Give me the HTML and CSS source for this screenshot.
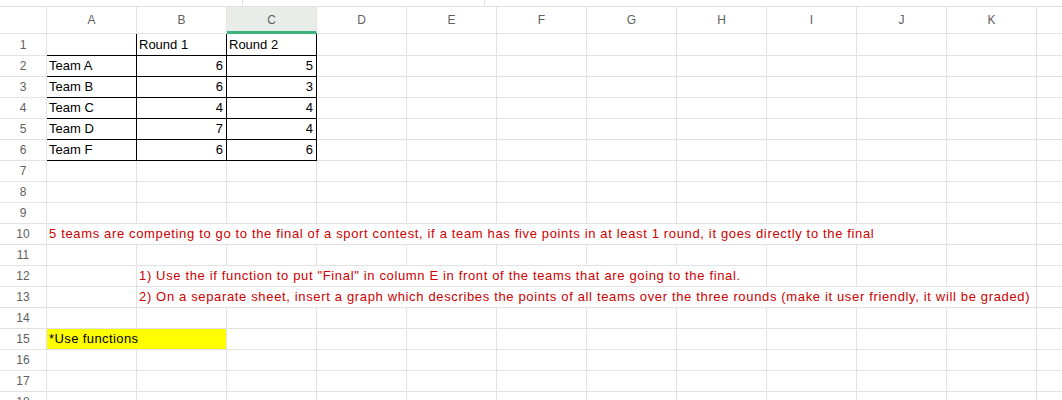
FILE: index.html
```html
<!DOCTYPE html>
<html>
<head>
<meta charset="utf-8">
<link rel="stylesheet" href="styles.css">
</head>
<body>
<div class="sheet">
  <div class="topbar"><div class="seg first"></div><div class="seg"></div><div class="seg rest"></div></div>

  <div class="row hdr">
    <div class="corner"></div>
    <div>A</div><div>B</div><div class="sel">C</div><div>D</div><div>E</div><div>F</div><div>G</div><div>H</div><div>I</div><div>J</div><div>K</div><div class="last"></div>
  </div>

  <div class="row r1">
    <div class="num">1</div>
    <div class="br bb"></div><div class="br bb">Round 1</div><div class="br bb">Round 2</div>
    <div></div><div></div><div></div><div></div><div></div><div></div><div></div><div></div><div class="last"></div>
  </div>
  <div class="row">
    <div class="num">2</div>
    <div class="br bb">Team A</div><div class="br bb right">6</div><div class="br bb right">5</div>
    <div></div><div></div><div></div><div></div><div></div><div></div><div></div><div></div><div class="last"></div>
  </div>
  <div class="row">
    <div class="num">3</div>
    <div class="br bb">Team B</div><div class="br bb right">6</div><div class="br bb right">3</div>
    <div></div><div></div><div></div><div></div><div></div><div></div><div></div><div></div><div class="last"></div>
  </div>
  <div class="row">
    <div class="num">4</div>
    <div class="br bb">Team C</div><div class="br bb right">4</div><div class="br bb right">4</div>
    <div></div><div></div><div></div><div></div><div></div><div></div><div></div><div></div><div class="last"></div>
  </div>
  <div class="row">
    <div class="num">5</div>
    <div class="br bb">Team D</div><div class="br bb right">7</div><div class="br bb right">4</div>
    <div></div><div></div><div></div><div></div><div></div><div></div><div></div><div></div><div class="last"></div>
  </div>
  <div class="row">
    <div class="num">6</div>
    <div class="br bb">Team F</div><div class="br bb right">6</div><div class="br bb right">6</div>
    <div></div><div></div><div></div><div></div><div></div><div></div><div></div><div></div><div class="last"></div>
  </div>
  <div class="row">
    <div class="num">7</div>
    <div></div><div></div><div></div><div></div><div></div><div></div><div></div><div></div><div></div><div></div><div></div><div class="last"></div>
  </div>
  <div class="row">
    <div class="num">8</div>
    <div></div><div></div><div></div><div></div><div></div><div></div><div></div><div></div><div></div><div></div><div></div><div class="last"></div>
  </div>
  <div class="row">
    <div class="num">9</div>
    <div></div><div></div><div></div><div></div><div></div><div></div><div></div><div></div><div></div><div></div><div></div><div class="last"></div>
  </div>
  <div class="row">
    <div class="num">10</div>
    <div class="note span10">5 teams are competing to go to the final of a sport contest, if a team has five points in at least 1 round, it goes directly to the final</div>
    <div></div><div class="last"></div>
  </div>
  <div class="row">
    <div class="num">11</div>
    <div></div><div></div><div></div><div></div><div></div><div></div><div></div><div></div><div></div><div></div><div></div><div class="last"></div>
  </div>
  <div class="row">
    <div class="num">12</div>
    <div></div>
    <div class="note span7">1) Use the if function to put "Final" in column E in front of the teams that are going to the final.</div>
    <div></div><div></div><div></div><div class="last"></div>
  </div>
  <div class="row">
    <div class="num">13</div>
    <div></div>
    <div class="note span10">2) On a separate sheet, insert a graph which describes the points of all teams over the three rounds (make it user friendly, it will be graded)</div>
    <div class="last"></div>
  </div>
  <div class="row">
    <div class="num">14</div>
    <div></div><div></div><div></div><div></div><div></div><div></div><div></div><div></div><div></div><div></div><div></div><div class="last"></div>
  </div>
  <div class="row">
    <div class="num">15</div>
    <div class="hl span2">*Use functions</div>
    <div></div><div></div><div></div><div></div><div></div><div></div><div></div><div></div><div></div><div class="last"></div>
  </div>
  <div class="row">
    <div class="num">16</div>
    <div></div><div></div><div></div><div></div><div></div><div></div><div></div><div></div><div></div><div></div><div></div><div class="last"></div>
  </div>
  <div class="row">
    <div class="num">17</div>
    <div></div><div></div><div></div><div></div><div></div><div></div><div></div><div></div><div></div><div></div><div></div><div class="last"></div>
  </div>
  <div class="row">
    <div class="num">18</div>
    <div></div><div></div><div></div><div></div><div></div><div></div><div></div><div></div><div></div><div></div><div></div><div class="last"></div>
  </div>
</div>
</body>
</html>
```
FILE: styles.css
```css
* {
  box-sizing: border-box;
}

body {
  margin: 0;
  background: #ffffff;
  font-family: "Liberation Sans", Arial, sans-serif;
  overflow: hidden;
}

.sheet {
  width: 1062px;
  height: 400px;
  overflow: hidden;
}

.topbar {
  display: flex;
  height: 7px;
  border-bottom: 1px solid #e1e1e1;
}

.topbar .seg {
  width: 242px;
  border-right: 1px solid #e1e1e1;
}

.topbar .seg.first {
  width: 243px;
}

.topbar .seg.rest {
  flex: 1;
  border-right: none;
}

.row {
  display: grid;
  grid-template-columns: 47px repeat(11, 90px) 1fr;
  height: 21px;
}

.row > div {
  display: flex;
  align-items: flex-end;
  padding: 0 3px 2px 2px;
  border-right: 1px solid #e2e2e2;
  border-bottom: 1px solid #e2e2e2;
  font-size: 13px;
  line-height: 16px;
  color: #000000;
  white-space: nowrap;
}

.row > div.last {
  border-right: none;
}

.row.hdr {
  height: 27px;
}

.row.hdr > div {
  align-items: center;
  justify-content: center;
  padding: 0 0 1px;
  font-size: 12px;
  color: #5f5f5f;
}

.row.hdr > div.sel {
  background: #e8ede9;
  border-bottom: 3px solid #3cb37a;
  padding-top: 2px;
}

.row.r1 {
  height: 22px;
}

.row > div.num {
  align-items: center;
  justify-content: center;
  padding: 0;
  font-size: 12px;
  color: #5f5f5f;
}

.row > div.br {
  border-right-color: #000000;
}

.row > div.bb {
  border-bottom-color: #000000;
}

.row > div.right {
  justify-content: flex-end;
}

.row > div.note {
  color: #cc0000;
  letter-spacing: 0.65px;
}

.row > div.hl {
  background: #ffff00;
  letter-spacing: 0.4px;
}

.span2 {
  grid-column: span 2;
}

.span7 {
  grid-column: span 7;
}

.span10 {
  grid-column: span 10;
}
```
